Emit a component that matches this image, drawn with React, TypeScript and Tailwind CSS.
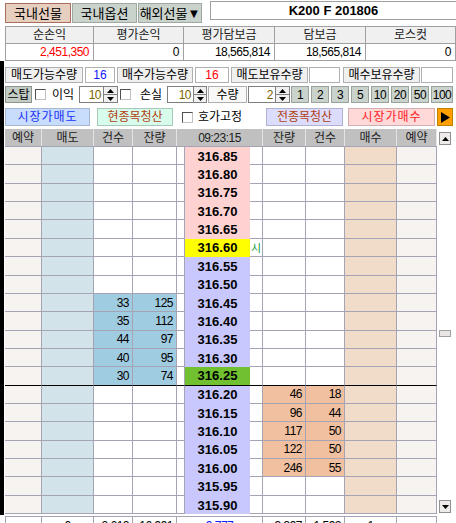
import React from "react";

type Row = {
  price: string;
  priceBg: string;
  sCnt?: string;
  sQty?: string;
  bQty?: string;
  bCnt?: string;
  mark?: string;
  sep?: boolean;
};

const PINK = "bg-[#ffd2d2]";
const LAV = "bg-[#c8c8ff]";

const rows: Row[] = [
  { price: "316.85", priceBg: PINK },
  { price: "316.80", priceBg: PINK },
  { price: "316.75", priceBg: PINK },
  { price: "316.70", priceBg: PINK },
  { price: "316.65", priceBg: PINK },
  { price: "316.60", priceBg: "bg-[#ffff00]", mark: "시" },
  { price: "316.55", priceBg: LAV },
  { price: "316.50", priceBg: LAV },
  { price: "316.45", priceBg: LAV, sCnt: "33", sQty: "125" },
  { price: "316.40", priceBg: LAV, sCnt: "35", sQty: "112" },
  { price: "316.35", priceBg: LAV, sCnt: "44", sQty: "97" },
  { price: "316.30", priceBg: LAV, sCnt: "40", sQty: "95" },
  { price: "316.25", priceBg: "bg-[#70c030]", sCnt: "30", sQty: "74", sep: true },
  { price: "316.20", priceBg: LAV, bQty: "46", bCnt: "18" },
  { price: "316.15", priceBg: LAV, bQty: "96", bCnt: "44" },
  { price: "316.10", priceBg: LAV, bQty: "117", bCnt: "50" },
  { price: "316.05", priceBg: LAV, bQty: "122", bCnt: "50" },
  { price: "316.00", priceBg: LAV, bQty: "246", bCnt: "55" },
  { price: "315.95", priceBg: LAV },
  { price: "315.90", priceBg: LAV },
];

function UpTri() {
  return (
    <svg width="7" height="4" viewBox="0 0 7 4">
      <path d="M3.5 0L7 4H0z" fill="#000" />
    </svg>
  );
}
function DownTri() {
  return (
    <svg width="7" height="4" viewBox="0 0 7 4">
      <path d="M0 0H7L3.5 4z" fill="#000" />
    </svg>
  );
}

function Spinner({ w }: { w: string }) {
  return (
    <div className={`${w} h-full flex flex-col border border-[#808080] bg-[#f0f0f0]`}>
      <div className="flex-1 flex items-center justify-center border-b border-[#808080]">
        <UpTri />
      </div>
      <div className="flex-1 flex items-center justify-center">
        <DownTri />
      </div>
    </div>
  );
}

function SpinInput({ w, sw, val }: { w: string; sw: string; val: string }) {
  return (
    <div className="flex h-full">
      <div
        className={`${w} h-full bg-white border border-[#808080] border-r-0 flex items-center justify-end pr-[2px] text-[#7a6400] tracking-[-0.5px]`}
      >
        {val}
      </div>
      <Spinner w={sw} />
    </div>
  );
}

function CheckBox({ cls }: { cls: string }) {
  return <div className={`${cls} w-[11px] h-[11px] bg-white border border-[#505050] border-r-[#c0c0c0] border-b-[#c0c0c0]`} />;
}

const G = "border-[#a4a4b4]";

function BodyRow({ r }: { r: Row }) {
  const b = r.sep ? "border-b border-b-black" : "border-b";
  const sellBg = r.sCnt ? "bg-[#a0cce2]" : "bg-white";
  const buyBg = r.bQty ? "bg-[#f0c0a0]" : "bg-white";
  return (
    <div className="flex h-[18.37px]">
      <div className={`w-[37px] h-full border-r ${b} ${G} bg-[#f6f3f0]`} />
      <div className={`w-[52px] h-full border-r ${b} ${G} bg-[#d2e3ea]`} />
      <div className={`w-[39px] h-full border-r ${b} ${G} ${sellBg} flex items-center justify-end pr-[3px] tracking-[-0.5px]`}>{r.sCnt}</div>
      <div className={`w-[44px] h-full border-r ${b} ${G} ${sellBg} flex items-center justify-end pr-[3px] tracking-[-0.5px]`}>{r.sQty}</div>
      <div className={`w-[8px] h-full border-r ${b} ${G} bg-white`} />
      <div
        className={`w-[65px] h-full ${r.sep ? "border-b border-b-black" : ""} ${r.priceBg} flex items-center justify-center font-bold text-[13px]`}
      >
        {r.price}
      </div>
      <div className={`w-[13px] h-full border-r ${b} ${G} bg-white flex items-center justify-center text-[#10a040] font-['Noto_Sans_CJK_KR',sans-serif] text-[11px]`}>
        {r.mark}
      </div>
      <div className={`w-[43px] h-full border-r ${b} ${G} ${buyBg} flex items-center justify-end pr-[3px] tracking-[-0.5px]`}>{r.bQty}</div>
      <div className={`w-[39px] h-full border-r ${b} ${G} ${buyBg} flex items-center justify-end pr-[3px] tracking-[-0.5px]`}>{r.bCnt}</div>
      <div className={`w-[52px] h-full border-r ${b} ${G} bg-[#f0dcc8]`} />
      <div className={`w-[40px] h-full border-r ${b} ${G} bg-[#f6f3f0]`} />
    </div>
  );
}

export default function App() {
  const sumHead = ["순손익", "평가손익", "평가담보금", "담보금", "로스컷"];
  const sumVal = ["2,451,350", "0", "18,565,814", "18,565,814", "0"];
  const qtyBtns = ["1", "2", "3", "5", "10", "20", "50"];
  return (
    <div className="w-[456px] h-[523px] overflow-hidden bg-white text-black font-['Liberation_Sans','Noto_Sans_CJK_KR',sans-serif] text-[12px] leading-none">
      {/* Tabs */}
      <div className="flex h-[26px]">
        <div className="flex pl-[5px] pt-[3px] gap-[1px]">
          <div className="w-[66px] h-[20px] flex items-center justify-center bg-[#e6cfbf] border border-[#a8705c] text-[13px]">국내선물</div>
          <div className="w-[65px] h-[20px] flex items-center justify-center bg-[#c9d2cb] border border-[#a0a8a2] text-[13px]">국내옵션</div>
          <div className="w-[64px] h-[20px] flex items-center justify-center bg-[#c9d2cb] border border-[#a0a8a2] text-[13px]">해외선물▼</div>
        </div>
        <div className="ml-[8px] mt-[1px] h-[19px] flex-1 flex items-center justify-center border border-r-0 border-[#a0a0a0] font-bold text-[13px]">
          K200 F 201806
        </div>
      </div>

      {/* Summary */}
      <div className="ml-[5px] grid grid-cols-[88px_90px_91px_91px_1fr] border-t border-l border-[#a0a0a0]">
        {sumHead.map((h) => (
          <div key={h} className="h-[17px] border-r border-b border-[#a0a0a0] bg-[#f0f0f0] flex items-center justify-center text-[#202020]">
            {h}
          </div>
        ))}
        {sumVal.map((v, i) => (
          <div
            key={i}
            className={`h-[17px] border-r border-b border-[#a0a0a0] bg-white flex items-center justify-end pr-[4px] tracking-[-0.5px] ${i === 0 ? "text-[#ff0000]" : "text-black"}`}
          >
            {v}
          </div>
        ))}
      </div>

      {/* Middle */}
      <div className="flex">
        <div className="w-[4px] h-[454px] bg-black" />
        <div className="ml-[1px] flex flex-col">
          {/* Row 3 */}
          <div className="mt-[6px] h-[16px] flex">
            <div className="w-[78px] h-full bg-[#f0f0f0] border border-[#b0b0b0] flex items-center justify-center">매도가능수량</div>
            <div className="ml-[2px] w-[30px] h-full bg-white border border-[#b0b0b0] flex items-center justify-center text-[#1020ff]">16</div>
            <div className="ml-[2px] w-[76px] h-full bg-[#f0f0f0] border border-[#b0b0b0] flex items-center justify-center">매수가능수량</div>
            <div className="ml-[2px] w-[34px] h-full bg-white border border-[#b0b0b0] flex items-center justify-center text-[#ff0000]">16</div>
            <div className="ml-[2px] w-[77px] h-full bg-[#f0f0f0] border border-[#b0b0b0] flex items-center justify-center">매도보유수량</div>
            <div className="ml-[1px] w-[31px] h-full bg-white border border-[#b0b0b0]" />
            <div className="ml-[3px] w-[77px] h-full bg-[#f0f0f0] border border-[#b0b0b0] flex items-center justify-center">매수보유수량</div>
            <div className="ml-[1px] w-[32px] h-full bg-white border border-[#b0b0b0]" />
          </div>

          {/* Row 4 */}
          <div className="mt-[3px] h-[17px] flex items-center">
            <div className="w-[27px] h-full bg-[#c2cbc4] border border-[#8c948e] flex items-center justify-center">스탑</div>
            <CheckBox cls="ml-[3px]" />
            <div className="ml-[6px] w-[24px]">이익</div>
            <div className="ml-[3px] h-full">
              <SpinInput w="w-[24px]" sw="w-[15px]" val="10" />
            </div>
            <CheckBox cls="ml-[2px]" />
            <div className="ml-[9px] w-[24px]">손실</div>
            <div className="ml-[3px] h-full">
              <SpinInput w="w-[26px]" sw="w-[14px]" val="10" />
            </div>
            <div className="ml-[1px] w-[39px] h-full bg-[#f8f8f8] border border-[#b0b0b0] flex items-center justify-center">수량</div>
            <div className="ml-[1px] h-full">
              <SpinInput w="w-[27px]" sw="w-[15px]" val="2" />
            </div>
            <div className="ml-[1px] h-full flex gap-[2px]">
              {qtyBtns.map((q) => (
                <div key={q} className="w-[18px] h-full bg-[#c9d2cb] border border-[#9aa29c] flex items-center justify-center tracking-[-0.5px]">
                  {q}
                </div>
              ))}
              <div className="w-[22px] h-full bg-[#c9d2cb] border border-[#9aa29c] flex items-center justify-center tracking-[-0.5px]">100</div>
            </div>
          </div>

          {/* Row 5 */}
          <div className="mt-[5px] h-[18px] flex items-center">
            <div className="w-[85px] h-full bg-[#c8dcfc] border border-[#a8b8d0] flex items-center justify-center text-[#1830ff] tracking-[1px]">시장가매도</div>
            <div className="ml-[7px] w-[76px] h-full bg-[#d8fcec] border border-[#a8c8b8] flex items-center justify-center text-[#b04010]">현종목청산</div>
            <CheckBox cls="ml-[9px]" />
            <div className="ml-[5px] w-[48px]">호가고정</div>
            <div className="ml-[20px] w-[77px] h-full bg-[#dcdcfc] border border-[#b0b0d0] flex items-center justify-center text-[#b04010]">전종목청산</div>
            <div className="ml-[5px] w-[87px] h-full bg-[#ffd8d8] border border-[#d0b0b0] flex items-center justify-center text-[#ff2020] tracking-[1px]">시장가매수</div>
            <div className="ml-[2px] w-[16px] h-full bg-[#ffa000] border border-[#c08000] flex items-center justify-center">
              <svg width="9" height="11" viewBox="0 0 9 11">
                <path d="M0 0L9 5.5L0 11z" fill="#000" />
              </svg>
            </div>
          </div>

          {/* Order book */}
          <div className="mt-[3px] flex">
            <div className="w-[432px] flex flex-col">
              <div className={`flex h-[18px] bg-[#c0c0c0] border-b ${G} text-[#202020]`}>
                <div className="w-[37px] h-full border-r border-[#e4e4e4] flex items-center justify-center">예약</div>
                <div className="w-[52px] h-full border-r border-[#e4e4e4] flex items-center justify-center">매도</div>
                <div className="w-[39px] h-full border-r border-[#e4e4e4] flex items-center justify-center">건수</div>
                <div className="w-[44px] h-full border-r border-[#e4e4e4] flex items-center justify-center">잔량</div>
                <div className="w-[86px] h-full border-r border-[#e4e4e4] flex items-center justify-center tracking-[-0.5px]">09:23:15</div>
                <div className="w-[43px] h-full border-r border-[#e4e4e4] flex items-center justify-center">잔량</div>
                <div className="w-[39px] h-full border-r border-[#e4e4e4] flex items-center justify-center">건수</div>
                <div className="w-[52px] h-full border-r border-[#e4e4e4] flex items-center justify-center">매수</div>
                <div className="w-[40px] h-full border-r border-[#e4e4e4] flex items-center justify-center">예약</div>
              </div>
              {rows.map((r) => (
                <BodyRow key={r.price} r={r} />
              ))}
            </div>
            {/* Scrollbar */}
            <div className="w-[19px] flex flex-col pl-[2px] pt-[3px] bg-white">
              <div className="w-[12px] h-[13px] bg-[#eeeaea] border border-[#909090] flex items-center justify-center">
                <svg width="7" height="4" viewBox="0 0 7 4">
                  <path d="M3.5 0L7 4H0z" fill="#000" />
                </svg>
              </div>
              <div className="mt-[185px] w-[12px] h-[7px] bg-[#eae6e6] border border-[#a0a0a0]" />
              <div className="mt-[163px] w-[12px] h-[13px] bg-[#eeeaea] border border-[#909090] flex items-center justify-center">
                <svg width="7" height="4" viewBox="0 0 7 4">
                  <path d="M0 0H7L3.5 4z" fill="#000" />
                </svg>
              </div>
            </div>
          </div>
        </div>
      </div>

      {/* Bottom totals */}
      <div className={`ml-[5px] mt-[1px] flex h-[18px] border-t ${G} w-[432px] tracking-[-0.5px]`}>
        <div className={`w-[37px] h-full border-l border-r ${G}`} />
        <div className={`w-[52px] h-full border-r ${G} flex items-center justify-center`}>0</div>
        <div className={`w-[39px] h-full border-r ${G} flex items-center justify-end pr-[3px]`}>2,612</div>
        <div className={`w-[44px] h-full border-r ${G} flex items-center justify-end pr-[3px]`}>16,991</div>
        <div className={`w-[86px] h-full border-r ${G} flex items-center justify-center text-[#1020ff]`}>9,777</div>
        <div className={`w-[43px] h-full border-r ${G} flex items-center justify-end pr-[3px]`}>3,397</div>
        <div className={`w-[39px] h-full border-r ${G} flex items-center justify-end pr-[3px]`}>1,592</div>
        <div className={`w-[52px] h-full border-r ${G} flex items-center justify-center`}>1</div>
        <div className={`w-[40px] h-full border-r ${G}`} />
      </div>
    </div>
  );
}
